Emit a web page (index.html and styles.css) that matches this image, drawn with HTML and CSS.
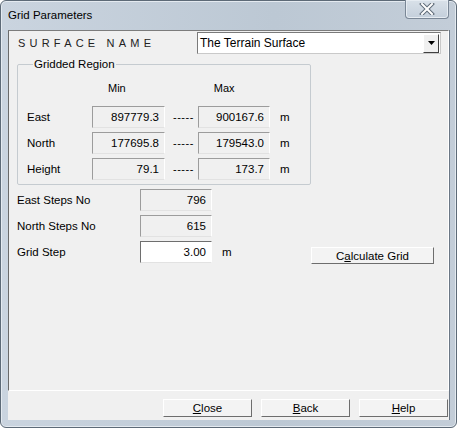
FILE: index.html
```html
<!DOCTYPE html>
<html lang="en">
<head>
  <meta charset="UTF-8" />
  <title>Grid Parameters</title>
  <link rel="stylesheet" href="styles.css">
</head>
<body>
  <div class="window">
    <!-- title bar -->
    <div class="titlebar">
      <span class="title">Grid Parameters</span>
      <button class="close-btn" title="Close">
        <svg width="16" height="12" viewBox="0 0 16 12">
          <path d="M3 1 L13 11 M13 1 L3 11" stroke="#5f6b78" stroke-width="4" stroke-linecap="square"/>
          <path d="M3 1 L13 11 M13 1 L3 11" stroke="#fff" stroke-width="2" stroke-linecap="square"/>
        </svg>
      </button>
    </div>

    <div class="client">
      <div class="page">
        <!-- surface selection -->
        <div class="surface-row">
          <span class="surface-label">SURFACE NAME</span>
          <div class="combo">
            <span class="combo-text">The Terrain Surface</span>
            <span class="combo-arrow">
              <svg width="7" height="4" viewBox="0 0 7 4"><path d="M0 0 H7 L3.5 4 Z" fill="#000"/></svg>
            </span>
          </div>
        </div>

        <!-- gridded region box -->
        <fieldset class="region">
          <legend>Gridded Region</legend>
          <div class="region-head">
            <span class="head-min">Min</span>
            <span class="head-max">Max</span>
          </div>
          <div class="region-row">
            <span class="row-label">East</span>
            <span class="field ro w-min">897779.3</span>
            <span class="dash">-----</span>
            <span class="field ro w-max">900167.6</span>
            <span class="unit">m</span>
          </div>
          <div class="region-row">
            <span class="row-label">North</span>
            <span class="field ro w-min">177695.8</span>
            <span class="dash">-----</span>
            <span class="field ro w-max">179543.0</span>
            <span class="unit">m</span>
          </div>
          <div class="region-row">
            <span class="row-label">Height</span>
            <span class="field ro w-min">79.1</span>
            <span class="dash">-----</span>
            <span class="field ro w-max">173.7</span>
            <span class="unit">m</span>
          </div>
        </fieldset>

        <!-- steps -->
        <div class="steps">
          <div class="step-row">
            <span class="step-label">East Steps No</span>
            <span class="field ro w-step">796</span>
          </div>
          <div class="step-row">
            <span class="step-label">North Steps No</span>
            <span class="field ro w-step">615</span>
          </div>
          <div class="step-row">
            <span class="step-label">Grid Step</span>
            <span class="field edit w-step">3.00</span>
            <span class="unit">m</span>
            <button class="btn calc-btn">C<u>a</u>lculate Grid</button>
          </div>
        </div>
      </div>

      <!-- dialog buttons -->
      <div class="footer">
        <button class="btn footer-btn"><u>C</u>lose</button>
        <button class="btn footer-btn"><u>B</u>ack</button>
        <button class="btn footer-btn"><u>H</u>elp</button>
      </div>
    </div>
  </div>
</body>
</html>
```

FILE: styles.css
```css
/* general */
body {
  margin: 0;
  background: #fff;
  font-family: "Liberation Sans", Arial, sans-serif;
  font-size: 11px;
  color: #000;
}

/* window frame */
.window {
  box-sizing: border-box;
  width: 457px;
  height: 428px;
  border: 1px solid #5d6a77;
  border-radius: 6px;
  background: linear-gradient(to right, #cad4df, #bcc8d4 60%, #c3cdd8);
  box-shadow: inset 0 0 0 1px #e4eaf0;
  display: flex;
  flex-direction: column;
}

.titlebar {
  height: 29px;
  display: flex;
  align-items: flex-start;
  flex-shrink: 0;
}

.title {
  font-size: 11.5px;
  padding: 8px 0 0 7px;
  color: #000;
}

.close-btn {
  margin-left: auto;
  margin-right: 7px;
  margin-top: -1px;
  width: 44px;
  height: 19px;
  border: 1px solid #7a8796;
  border-top: none;
  border-radius: 0 0 4px 4px;
  background: linear-gradient(#d9e1e9, #c4cfdb);
  box-shadow: inset 0 0 0 1px #e6ecf2;
  display: flex;
  align-items: center;
  justify-content: center;
  padding: 0;
}

.client {
  margin: 0 6px 0 7px;
  height: 390px;
  background: #f0f0f0;
  border-right: 1px solid #6b7785;
  display: flex;
  flex-direction: column;
}

.page {
  flex: 1;
  border-top: 1px solid #7c7c7c;
  border-left: 1px solid #6a6a6a;
  border-right: 1px solid #fff;
  border-bottom: 1px solid #fff;
}

/* surface row */
.surface-row {
  display: flex;
  align-items: center;
  margin-top: 1px;
  height: 22px;
}

.surface-label {
  padding-left: 9px;
  letter-spacing: 4.2px;
  font-size: 11px;
  color: #222;
}

.combo {
  box-sizing: border-box;
  margin-left: auto;
  margin-right: 7px;
  width: 244px;
  height: 22px;
  background: #fff;
  border-top: 1px solid #7a7a7a;
  border-left: 1px solid #7a7a7a;
  border-right: 1px solid #c9c9c9;
  border-bottom: 1px solid #c9c9c9;
  display: flex;
  align-items: center;
}

.combo-text {
  flex: 1;
  padding-left: 2px;
  font-size: 12px;
}

.combo-arrow {
  box-sizing: border-box;
  width: 16px;
  height: 19px;
  margin-right: 1px;
  background: #f0f0f0;
  border-top: 1px solid #fff;
  border-left: 1px solid #fff;
  border-right: 1px solid #404040;
  border-bottom: 1px solid #404040;
  display: flex;
  align-items: center;
  justify-content: center;
}

/* gridded region */
.region {
  box-sizing: border-box;
  width: 294px;
  margin: 4px 0 0 8px;
  padding: 9px 0 4px 9px;
  border: 1px solid #c5cbd0;
  border-radius: 2px;
}

.region legend {
  padding: 0 1px;
  margin-left: 6px;
  font-size: 11.5px;
}

.region-head {
  display: flex;
  height: 18px;
  align-items: center;
  margin-bottom: 9px;
}

.head-min {
  margin-left: 81px;
}

.head-max {
  margin-left: 88px;
}

.region-row {
  display: flex;
  align-items: center;
  height: 22px;
  margin-bottom: 4px;
}

.region-row:last-child {
  margin-bottom: 0;
}

.row-label {
  width: 65px;
  font-size: 11.5px;
}

.dash {
  width: 33px;
  padding-left: 8px;
  box-sizing: border-box;
  letter-spacing: 0.5px;
}

.unit {
  margin-left: 10px;
  font-size: 11.5px;
}

/* text fields */
.field {
  box-sizing: border-box;
  height: 22px;
  padding-right: 5px;
  display: flex;
  align-items: center;
  justify-content: flex-end;
  font-size: 11.5px;
  border-top: 1px solid #9c9c9c;
  border-left: 1px solid #9c9c9c;
  border-right: 1px solid #fff;
  border-bottom: 1px solid #e2e2e2;
}

.field.ro {
  background: #f0f0f0;
}

.field.edit {
  background: #fff;
  border-top-color: #6e6e6e;
  border-left-color: #6e6e6e;
}

.w-min { width: 73px; }
.w-max { width: 72px; }
.w-step { width: 72px; }

/* steps */
.steps {
  margin-top: 4px;
  padding-left: 8px;
}

.step-row {
  display: flex;
  align-items: center;
  height: 22px;
  margin-bottom: 4px;
}

.step-label {
  width: 123px;
  font-size: 11.5px;
}

/* buttons */
.btn {
  box-sizing: border-box;
  font-family: "Liberation Sans", Arial, sans-serif;
  font-size: 11.5px;
  color: #000;
  background: #f3f3f3;
  border-top: 1px solid #fff;
  border-left: 1px solid #fff;
  border-right: 1px solid #6d6d6d;
  border-bottom: 1px solid #6d6d6d;
  border-radius: 0;
  padding: 0;
  cursor: pointer;
}

.calc-btn {
  margin-left: auto;
  margin-right: 14px;
  align-self: flex-end;
  width: 123px;
  height: 17px;
  margin-bottom: -1px;
}

.footer {
  height: 29px;
  display: flex;
  justify-content: flex-end;
  align-items: flex-start;
  gap: 9px;
  padding-top: 8px;
  padding-right: 1px;
  box-sizing: border-box;
}

.footer-btn {
  width: 89px;
  height: 18px;
}
```
